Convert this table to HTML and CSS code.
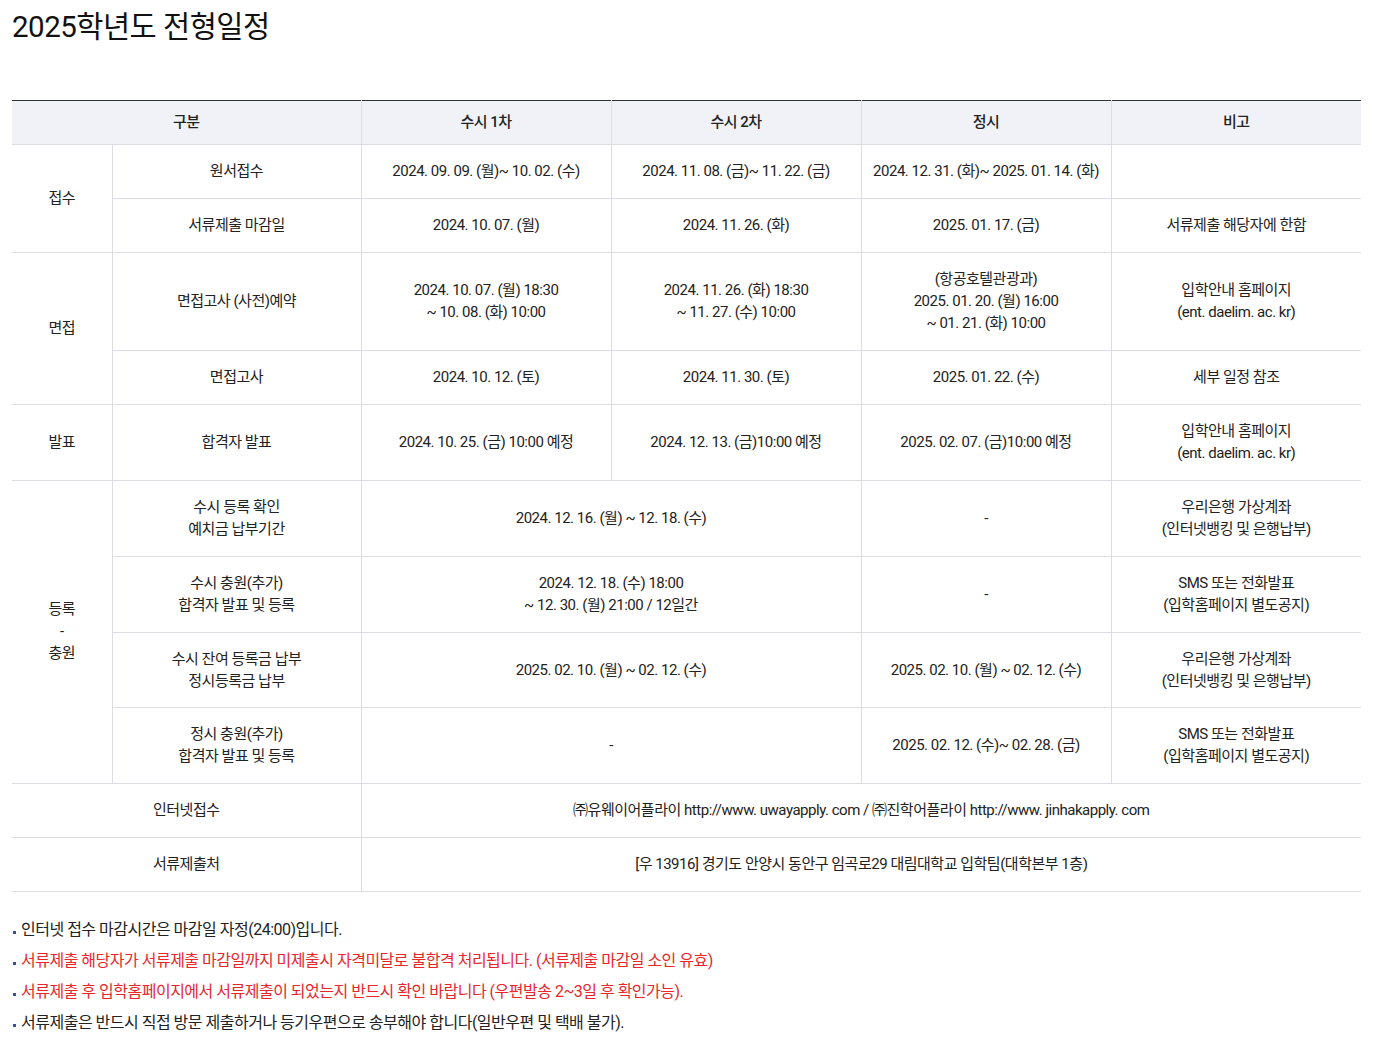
FILE: index.html
```html
<!DOCTYPE html>
<html lang="ko">
<head>
<meta charset="utf-8">
<title>2025학년도 전형일정</title>
<link rel="stylesheet" href="styles.css">
</head>
<body>
<div class="page">
  <h2 class="title">2025학년도 전형일정</h2>
  <table class="schedule">
    <colgroup>
      <col class="c-cat"><col class="c-sub"><col class="c-d"><col class="c-d"><col class="c-d"><col class="c-d">
    </colgroup>
    <thead>
      <tr><th colspan="2">구분</th><th>수시 1차</th><th>수시 2차</th><th>정시</th><th>비고</th></tr>
    </thead>
    <tbody>
      <tr><td rowspan="2">접수</td><td>원서접수</td><td>2024. 09. 09. (월)~ 10. 02. (수)</td><td>2024. 11. 08. (금)~ 11. 22. (금)</td><td>2024. 12. 31. (화)~ 2025. 01. 14. (화)</td><td></td></tr>
      <tr><td>서류제출 마감일</td><td>2024. 10. 07. (월)</td><td>2024. 11. 26. (화)</td><td>2025. 01. 17. (금)</td><td>서류제출 해당자에 한함</td></tr>
      <tr><td rowspan="2">면접</td><td>면접고사 (사전)예약</td><td>2024. 10. 07. (월) 18:30<br>~ 10. 08. (화) 10:00</td><td>2024. 11. 26. (화) 18:30<br>~ 11. 27. (수) 10:00</td><td>(항공호텔관광과)<br>2025. 01. 20. (월) 16:00<br>~ 01. 21. (화) 10:00</td><td>입학안내 홈페이지<br>(ent. daelim. ac. kr)</td></tr>
      <tr><td>면접고사</td><td>2024. 10. 12. (토)</td><td>2024. 11. 30. (토)</td><td>2025. 01. 22. (수)</td><td>세부 일정 참조</td></tr>
      <tr class="tall"><td>발표</td><td>합격자 발표</td><td>2024. 10. 25. (금) 10:00 예정</td><td>2024. 12. 13. (금)10:00 예정</td><td>2025. 02. 07. (금)10:00 예정</td><td>입학안내 홈페이지<br>(ent. daelim. ac. kr)</td></tr>
      <tr><td rowspan="4">등록<br>-<br>충원</td><td>수시 등록 확인<br>예치금 납부기간</td><td colspan="2">2024. 12. 16. (월) ~ 12. 18. (수)</td><td>-</td><td>우리은행 가상계좌<br>(인터넷뱅킹 및 은행납부)</td></tr>
      <tr><td>수시 충원(추가)<br>합격자 발표 및 등록</td><td colspan="2">2024. 12. 18. (수) 18:00<br>~ 12. 30. (월) 21:00 / 12일간</td><td>-</td><td>SMS 또는 전화발표<br>(입학홈페이지 별도공지)</td></tr>
      <tr class="short"><td>수시 잔여 등록금 납부<br>정시등록금 납부</td><td colspan="2">2025. 02. 10. (월) ~ 02. 12. (수)</td><td>2025. 02. 10. (월) ~ 02. 12. (수)</td><td>우리은행 가상계좌<br>(인터넷뱅킹 및 은행납부)</td></tr>
      <tr><td>정시 충원(추가)<br>합격자 발표 및 등록</td><td colspan="2">-</td><td>2025. 02. 12. (수)~ 02. 28. (금)</td><td>SMS 또는 전화발표<br>(입학홈페이지 별도공지)</td></tr>
      <tr><td colspan="2">인터넷접수</td><td colspan="4">㈜유웨이어플라이 http://www. uwayapply. com / ㈜진학어플라이 http://www. jinhakapply. com</td></tr>
      <tr><td colspan="2">서류제출처</td><td colspan="4">[우 13916] 경기도 안양시 동안구 임곡로29 대림대학교 입학팀(대학본부 1층)</td></tr>
    </tbody>
  </table>
  <ul class="notes">
    <li>인터넷 접수 마감시간은 마감일 자정(24:00)입니다.</li>
    <li class="red">서류제출 해당자가 서류제출 마감일까지 미제출시 자격미달로 불합격 처리됩니다. (서류제출 마감일 소인 유효)</li>
    <li class="red">서류제출 후 입학홈페이지에서 서류제출이 되었는지 반드시 확인 바랍니다 (우편발송 2~3일 후 확인가능).</li>
    <li>서류제출은 반드시 직접 방문 제출하거나 등기우편으로 송부해야 합니다(일반우편 및 택배 불가).</li>
  </ul>
</div>
</body>
</html>
```

FILE: styles.css
```css
* { box-sizing: border-box; }
html, body { margin: 0; padding: 0; background: #fff; }
body {
  font-family: Roboto, "Noto Sans CJK KR", sans-serif;
  color: #222;
}
.page { padding: 0 12px; }
.title {
  margin: 0;
  padding-top: 7px;
  font-size: 29.5px;
  line-height: 40px;
  height: 47px;
  font-weight: 400;
  letter-spacing: -0.5px;
  color: #111;
}
.schedule {
  margin-top: 53px;
  width: 1349px;
  border-collapse: collapse;
  table-layout: fixed;
  border-top: 1px solid #333;
  font-size: 15px;
  letter-spacing: -0.48px;
}
.c-cat { width: 100px; }
.c-sub { width: 249px; }
.c-d { width: 250px; }
.schedule th, .schedule td {
  border: 1px solid #dcdde3;
  text-align: center;
  vertical-align: middle;
  padding: 15px 4px 16px;
  line-height: 22px;
}
.schedule th {
  background: #f1f2f7;
  font-weight: 500;
  border-top: 0;
  padding: 10px 4px 10.5px;
}
.schedule tr > :first-child { border-left: 0; }
.schedule tr > :last-child { border-right: 0; }
.schedule td[rowspan] { border-left: 0; }
.schedule tr.tall td { padding-top: 26px; padding-bottom: 26px; }
.schedule tr.tall td:last-child { padding-top: 15px; padding-bottom: 16px; }
.schedule tr.short td { padding-bottom: 15px; }
.notes {
  list-style: none;
  margin: 22px 0 0;
  padding: 0;
  font-size: 16px;
  letter-spacing: -0.5px;
}
.notes li {
  position: relative;
  padding-left: 9px;
  line-height: 31px;
}
.notes li::before {
  content: "";
  position: absolute;
  left: 1px;
  top: 17px;
  width: 3px;
  height: 3px;
  background: #33509a;
}
.notes li.red { color: #e8262c; }
```
